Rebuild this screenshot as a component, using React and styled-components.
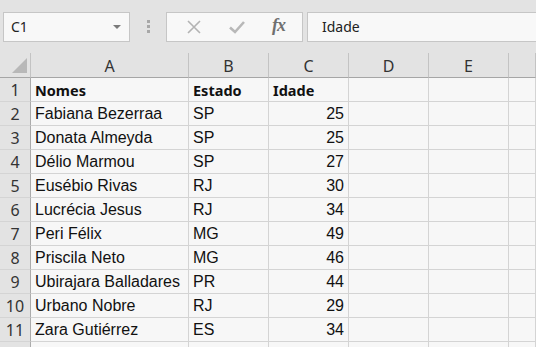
import React from "react";
import styled, { createGlobalStyle } from "styled-components";

const GlobalStyle = createGlobalStyle`
  html, body {
    margin: 0;
    padding: 0;
    background: #e3e3e3;
  }
  body {
    width: 536px;
    height: 347px;
    overflow: hidden;
  }
`

const rows = [
  { name: "Fabiana Bezerraa", uf: "SP", age: 25 },
  { name: "Donata Almeyda", uf: "SP", age: 25 },
  { name: "Délio Marmou", uf: "SP", age: 27 },
  { name: "Eusébio Rivas", uf: "RJ", age: 30 },
  { name: "Lucrécia Jesus", uf: "RJ", age: 34 },
  { name: "Peri Félix", uf: "MG", age: 49 },
  { name: "Priscila Neto", uf: "MG", age: 46 },
  { name: "Ubirajara Balladares", uf: "PR", age: 44 },
  { name: "Urbano Nobre", uf: "RJ", age: 29 },
  { name: "Zara Gutiérrez", uf: "ES", age: 34 }
]

const columns = ["A", "B", "C", "D", "E", ""]

const Sheet = styled.div`
  width: 536px;
  height: 347px;
  background: #e3e3e3;
  overflow: hidden;
`
const Toolbar = styled.div`
  height: 53px;
  display: flex;
  align-items: center;
  padding-left: 3px;
  box-sizing: border-box;
`
const NameBox = styled.div`
  width: 127px;
  height: 30px;
  box-sizing: border-box;
  border: 1px solid #c6c6c6;
  background: #f8f8f8;
  display: flex;
  align-items: center;
  justify-content: space-between;
  padding: 0 8px 0 7px;
  font-family: "Noto Sans", sans-serif;
  font-size: 14px;
  color: #222;
`
const Caret = styled.span`
  width: 0;
  height: 0;
  border-left: 4px solid transparent;
  border-right: 4px solid transparent;
  border-top: 4px solid #7a7a7a;
`
const Grip = styled.div`
  width: 3px;
  margin: 0 16px 0 17px;
  display: grid;
  gap: 2px;
  span {
    width: 3px;
    height: 3px;
    background: #a8a8a8;
  }
`
const ButtonGroup = styled.div`
  width: 137px;
  height: 30px;
  box-sizing: border-box;
  border: 1px solid #c6c6c6;
  background: #f8f8f8;
  display: flex;
  align-items: center;
  justify-content: space-around;
  padding: 0 4px 0 6px;
`
const Fx = styled.span`
  font-family: "Liberation Serif", serif;
  font-style: italic;
  font-weight: 700;
  font-size: 18px;
  color: #707070;
  letter-spacing: -1px;
  margin-top: -2px;
`
const FormulaInput = styled.div`
  flex: 1;
  height: 30px;
  margin-left: 4px;
  box-sizing: border-box;
  border: 1px solid #c6c6c6;
  border-right: none;
  background: #f8f8f8;
  display: flex;
  align-items: center;
  padding-left: 14px;
  font-family: "Noto Sans", sans-serif;
  font-size: 14px;
  color: #222;
`
const Grid = styled.div`
  display: grid;
  grid-template-columns: 31px 158px 80px 80px 80px 80px 1fr;
  grid-template-rows: 25px repeat(12, 24px);
  background: #f7f7f7;
`
const Corner = styled.div`
  background: #e3e3e3;
  border-right: 1px solid #c3c3c3;
  border-bottom: 1px solid #a6a6a6;
  display: flex;
  align-items: flex-end;
  justify-content: flex-end;
  padding: 0 3px 4px 0;
`
const ColHead = styled.div`
  background: #e3e3e3;
  border-right: 1px solid #c3c3c3;
  border-bottom: 1px solid #a6a6a6;
  display: flex;
  align-items: center;
  justify-content: center;
  font-family: "Noto Sans", sans-serif;
  font-size: 16px;
  color: #333;
  padding-top: 1px;
`
const RowHead = styled.div`
  background: #e3e3e3;
  border-right: 1px solid #ababab;
  border-bottom: 1px solid #d4d4d4;
  display: flex;
  align-items: center;
  justify-content: center;
  font-family: "Noto Sans", sans-serif;
  font-size: 16px;
  color: #333;
`
const Cell = styled.div`
  border-right: 1px solid #d4d4d4;
  border-bottom: 1px solid #d4d4d4;
  display: flex;
  align-items: center;
  justify-content: ${p => (p.$num ? "flex-end" : "flex-start")};
  padding: ${p => (p.$num ? "1px 4px 0 0" : "1px 0 0 4px")};
  font-family: ${p => (p.$bold ? '"Noto Sans", sans-serif' : '"Liberation Sans", sans-serif')};
  font-weight: ${p => (p.$bold ? 700 : 400)};
  font-size: ${p => (p.$bold ? "14.5px" : "16px")};
  color: #111;
  white-space: nowrap;
  overflow: hidden;
`

const Row = ({ n, cells }) => (
  <>
    <RowHead>{n}</RowHead>
    {cells.map((c, i) => (
      <Cell key={i} $num={c.num} $bold={c.bold}>{c.text}</Cell>
    ))}
  </>
)

const App = () => {
  const body = [
    [
      { text: "Nomes", bold: true },
      { text: "Estado", bold: true },
      { text: "Idade", bold: true },
      {}, {}, {}
    ],
    ...rows.map(r => [
      { text: r.name },
      { text: r.uf },
      { text: r.age, num: true },
      {}, {}, {}
    ]),
    [{}, {}, {}, {}, {}, {}]
  ]
  return (
    <Sheet>
      <GlobalStyle />
      <Toolbar>
        <NameBox>
          C1
          <Caret />
        </NameBox>
        <Grip><span /><span /><span /></Grip>
        <ButtonGroup>
          <svg width="16" height="16" viewBox="0 0 16 16">
            <path d="M2 2 L14 14 M14 2 L2 14" stroke="#b3b3b3" strokeWidth="1.6" fill="none" />
          </svg>
          <svg width="18" height="16" viewBox="0 0 18 16">
            <path d="M2 8.5 L7 13 L16 3" stroke="#b8b8b8" strokeWidth="2.6" fill="none" />
          </svg>
          <Fx>fx</Fx>
        </ButtonGroup>
        <FormulaInput>Idade</FormulaInput>
      </Toolbar>
      <Grid>
        <Corner>
          <svg width="15" height="15" viewBox="0 0 15 15">
            <path d="M15 0 L15 15 L0 15 Z" fill="#b8b8b8" />
          </svg>
        </Corner>
        {columns.map((c, i) => <ColHead key={i}>{c}</ColHead>)}
        {body.map((cells, i) => (
          <Row key={i} n={i < 11 ? i + 1 : ""} cells={cells} />
        ))}
      </Grid>
    </Sheet>
  )
}

export default App
